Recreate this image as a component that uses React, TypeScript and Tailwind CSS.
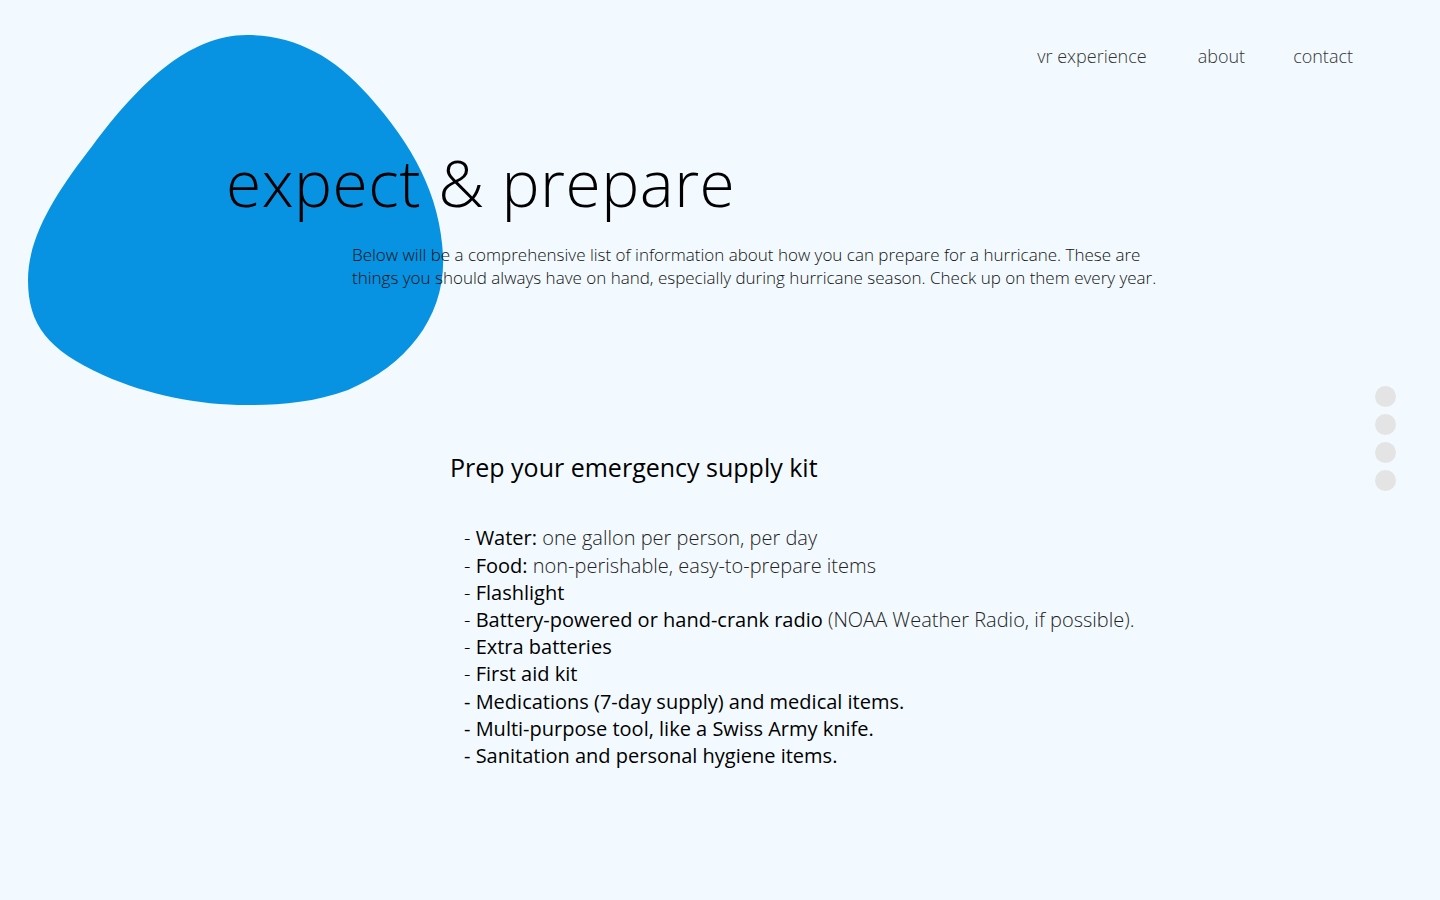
import React from "react";

const kit = [
  { bold: "Water:", rest: " one gallon per person, per day" },
  { bold: "Food:", rest: " non-perishable, easy-to-prepare items" },
  { bold: "Flashlight", rest: "" },
  { bold: "Battery-powered or hand-crank radio", rest: " (NOAA Weather Radio, if possible)." },
  { bold: "Extra batteries", rest: "" },
  { bold: "First aid kit", rest: "" },
];

const kitPlain = [
  "- Medications (7-day supply) and medical items.",
  "- Multi-purpose tool, like a Swiss Army knife.",
  "- Sanitation and personal hygiene items.",
];

const Blob = () => (
  <svg
    className="absolute left-[28px] top-[35px]"
    width="416"
    height="371"
    viewBox="0 0 416 371"
  >
    <path
      d="M219,0 C265,0 305,20 340,60 C385,110 412,160 415,220 C418,280 380,330 320,355 C285,368 250,370 219,370 C170,370 120,360 75,340 C20,315 0,290 0,245 C0,200 30,155 65,110 C110,50 160,0 219,0 Z"
      fill="#0892e2"
    />
  </svg>
);

const App = () => {
  return (
    <div className="relative w-full min-h-screen bg-[#f2faff] font-['Open_Sans',sans-serif] overflow-hidden">
      <Blob />

      <nav className="relative flex justify-end gap-[48px] pt-[43px] pr-[87px] text-[18px] font-light text-[#333]">
        <a className="mr-[3px]">vr experience</a>
        <a>about</a>
        <a>contact</a>
      </nav>

      <div className="relative pl-[226px] pt-[75px]">
        <h1 className="text-[64px] font-light leading-[1.2] tracking-[0.5px] text-black">
          expect &amp; prepare
        </h1>
        <p className="ml-[126px] mt-[21px] w-[830px] text-[17px] font-light leading-[23px] text-[#111]">
          Below will be a comprehensive list of information about how you can prepare for a hurricane. These are things you should always have on hand, especially during hurricane season. Check up on them every year.
        </p>
      </div>

      <section className="relative pl-[450px] pt-[160px]">
        <h2 className="text-[25px] font-normal text-black">
          Prep your emergency supply kit
        </h2>
        <ul className="ml-[14px] mt-[38px] text-[20px] leading-[27.2px] text-black">
          {kit.map((k) => (
            <li key={k.bold}>
              <span className="font-light">- </span>
              <span className="font-normal">{k.bold}</span>
              <span className="font-light text-[#222]">{k.rest}</span>
            </li>
          ))}
          {kitPlain.map((t) => (
            <li key={t} className="font-normal">
              {t}
            </li>
          ))}
        </ul>
      </section>

      <div className="absolute right-[44px] top-[386px] flex flex-col gap-[7px]">
        <span className="block w-[21px] h-[21px] rounded-full bg-[#e4e4e4]" />
        <span className="block w-[21px] h-[21px] rounded-full bg-[#e4e4e4]" />
        <span className="block w-[21px] h-[21px] rounded-full bg-[#e4e4e4]" />
        <span className="block w-[21px] h-[21px] rounded-full bg-[#e4e4e4]" />
      </div>
    </div>
  );
};

export default App;
